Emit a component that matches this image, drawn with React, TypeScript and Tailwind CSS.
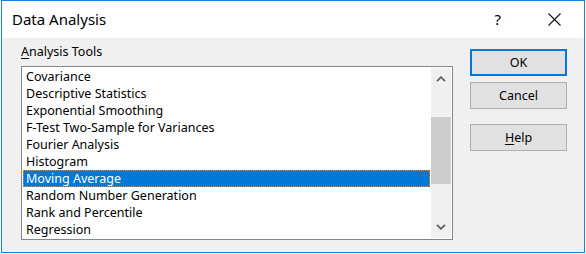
import React from "react";

const items = [
  "Covariance",
  "Descriptive Statistics",
  "Exponential Smoothing",
  "F-Test Two-Sample for Variances",
  "Fourier Analysis",
  "Histogram",
  "Moving Average",
  "Random Number Generation",
  "Rank and Percentile",
  "Regression",
];

const font = { fontFamily: '"Segoe UI", "Noto Sans", "Open Sans", sans-serif' };

function Chevron({ up }: { up: boolean }) {
  return (
    <svg width="10" height="6" viewBox="0 0 10 6" className="block">
      <path
        d={up ? "M1 5.2 L5 1.2 L9 5.2" : "M1 0.8 L5 4.8 L9 0.8"}
        fill="none"
        stroke="#606060"
        strokeWidth="1.8"
      />
    </svg>
  );
}

export default function App() {
  return (
    <div className="w-[586px] h-[254px] bg-white pl-[1px] text-black" style={font}>
      <div className="w-[584px] h-[253px] border border-[#1a82d6] bg-[#f0f0f0] flex flex-col">
        <div className="h-[37px] bg-white flex items-center shrink-0">
          <span className="ml-[10px] text-[15px] leading-none">Data Analysis</span>
          <div className="flex-1" />
          <span className="text-[15px] leading-none mr-[47px]">?</span>
          <svg width="13" height="13" viewBox="0 0 13 13" className="mr-[23px]">
            <path d="M0.5 0.5 L12.5 12.5 M12.5 0.5 L0.5 12.5" stroke="#111" strokeWidth="1.1" />
          </svg>
        </div>
        <div className="flex flex-1">
          <div className="ml-[19px] w-[432px] pt-[6px] flex flex-col">
            <div className="h-[16px] text-[12.5px] leading-[16px]">
              <span className="underline underline-offset-2">A</span>nalysis Tools
            </div>
            <div className="mt-[6px] h-[174px] border border-[#82878f] bg-white flex p-[1px]">
              <div className="w-[407px] flex flex-col">
                {items.map((it) => {
                  const sel = it === "Moving Average";
                  return (
                    <div
                      key={it}
                      className={
                        sel
                          ? "h-[17px] bg-[#0078d7] text-white pl-[2px] pt-[1px] text-[12.5px] leading-[14px] border border-dotted border-[#ff8728]"
                          : "h-[17px] pl-[3px] pt-[1px] text-[12.5px] leading-[16px]"
                      }
                    >
                      {it}
                    </div>
                  );
                })}
              </div>
              <div className="w-[1px]" />
              <div className="w-[20px] bg-[#f0f0f0] flex flex-col">
                <div className="h-[21px] flex items-center justify-center pt-[1px]">
                  <Chevron up />
                </div>
                <div className="flex-1 flex flex-col">
                  <div className="mt-[28px] h-[67px] bg-[#cdcdcd]" />
                </div>
                <div className="h-[21px] flex items-center justify-center pb-[2px]">
                  <Chevron up={false} />
                </div>
              </div>
            </div>
          </div>
          <div className="ml-[17px] pt-[11px] flex flex-col">
            <div className="w-[97px] h-[27px] border-2 border-[#0078d7] bg-[#e1e1e1] flex items-center justify-center text-[12.5px] pt-[1px]">
              OK
            </div>
            <div className="mt-[6px] w-[97px] h-[27px] border border-[#adadad] bg-[#e1e1e1] flex items-center justify-center text-[12.5px] pt-[1px]">
              Cancel
            </div>
            <div className="mt-[15px] w-[97px] h-[27px] border border-[#adadad] bg-[#e1e1e1] flex items-center justify-center text-[12.5px] pt-[1px]">
              <span>
                <span className="underline underline-offset-2">H</span>elp
              </span>
            </div>
          </div>
        </div>
      </div>
    </div>
  );
}
